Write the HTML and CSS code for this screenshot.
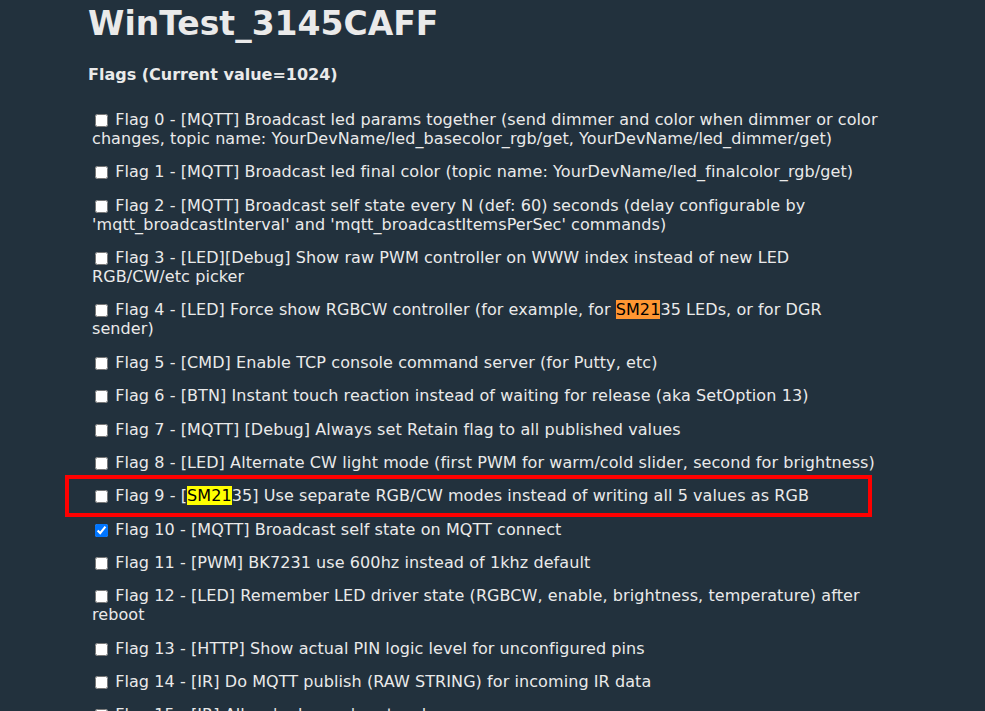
FILE: index.html
```html
<!DOCTYPE html>
<html>
<head>
<meta charset="utf-8">
<link rel="stylesheet" href="styles.css">
</head>
<body>
<div class="page">
  <h1 class="title">WinTest_3145CAFF</h1>
  <h2 class="subtitle">Flags (Current value=1024)</h2>
  <div class="flags">
    <label class="flag"><input type="checkbox"> Flag 0 - [MQTT] Broadcast led params together (send dimmer and color when dimmer or color changes, topic name: YourDevName/led_basecolor_rgb/get, YourDevName/led_dimmer/get)</label>
    <label class="flag"><input type="checkbox"> Flag 1 - [MQTT] Broadcast led final color (topic name: YourDevName/led_finalcolor_rgb/get)</label>
    <label class="flag"><input type="checkbox"> Flag 2 - [MQTT] Broadcast self state every N (def: 60) seconds (delay configurable by 'mqtt_broadcastInterval' and 'mqtt_broadcastItemsPerSec' commands)</label>
    <label class="flag"><input type="checkbox"> Flag 3 - [LED][Debug] Show raw PWM controller on WWW index instead of new LED RGB/CW/etc picker</label>
    <label class="flag"><input type="checkbox"> Flag 4 - [LED] Force show RGBCW controller (for example, for <span class="hl-active">SM21</span>35 LEDs, or for DGR sender)</label>
    <label class="flag"><input type="checkbox"> Flag 5 - [CMD] Enable TCP console command server (for Putty, etc)</label>
    <label class="flag"><input type="checkbox"> Flag 6 - [BTN] Instant touch reaction instead of waiting for release (aka SetOption 13)</label>
    <label class="flag"><input type="checkbox"> Flag 7 - [MQTT] [Debug] Always set Retain flag to all published values</label>
    <label class="flag"><input type="checkbox"> Flag 8 - [LED] Alternate CW light mode (first PWM for warm/cold slider, second for brightness)</label>
    <label class="flag"><input type="checkbox"> Flag 9 - [<span class="hl">SM21</span>35] Use separate RGB/CW modes instead of writing all 5 values as RGB<span class="annot"></span></label>
    <label class="flag"><input type="checkbox" checked> Flag 10 - [MQTT] Broadcast self state on MQTT connect</label>
    <label class="flag"><input type="checkbox"> Flag 11 - [PWM] BK7231 use 600hz instead of 1khz default</label>
    <label class="flag"><input type="checkbox"> Flag 12 - [LED] Remember LED driver state (RGBCW, enable, brightness, temperature) after reboot</label>
    <label class="flag"><input type="checkbox"> Flag 13 - [HTTP] Show actual PIN logic level for unconfigured pins</label>
    <label class="flag"><input type="checkbox"> Flag 14 - [IR] Do MQTT publish (RAW STRING) for incoming IR data</label>
    <label class="flag"><input type="checkbox"> Flag 15 - [IR] Allow 'unknown' protocol</label>
  </div>
</div>
</body>
</html>
```

FILE: styles.css
```css
html, body {
  margin: 0;
  padding: 0;
  overflow: hidden;
}
body {
  background: #22313d;
  color: #eaeaea;
  font-family: "DejaVu Sans", Verdana, sans-serif;
  font-size: 16px;
}
.page {
  padding: 4px 0 0 88px;
  width: 794px;
}
.title {
  margin: 0;
  font-size: 33px;
  font-weight: bold;
  line-height: 40px;
}
.subtitle {
  margin: 21px 0 0 0;
  font-size: 16px;
  font-weight: bold;
  line-height: 20px;
}
.flags {
  display: flex;
  flex-direction: column;
  gap: 14.36px;
  margin-top: 25px;
  padding-left: 4px;
  letter-spacing: 0.08px;
}
.flag {
  display: block;
  line-height: 19px;
  position: relative;
}
.flag input {
  vertical-align: middle;
  margin: 0 2px 0 3px;
  width: 13px;
  height: 13px;
}
.hl-active {
  background: #ff9632;
  color: #000;
}
.hl {
  background: #ffff00;
  color: #000;
}
.annot {
  position: absolute;
  left: -27px;
  top: -11.5px;
  width: 799px;
  height: 34px;
  border: 4px solid #ff0000;
}
```
